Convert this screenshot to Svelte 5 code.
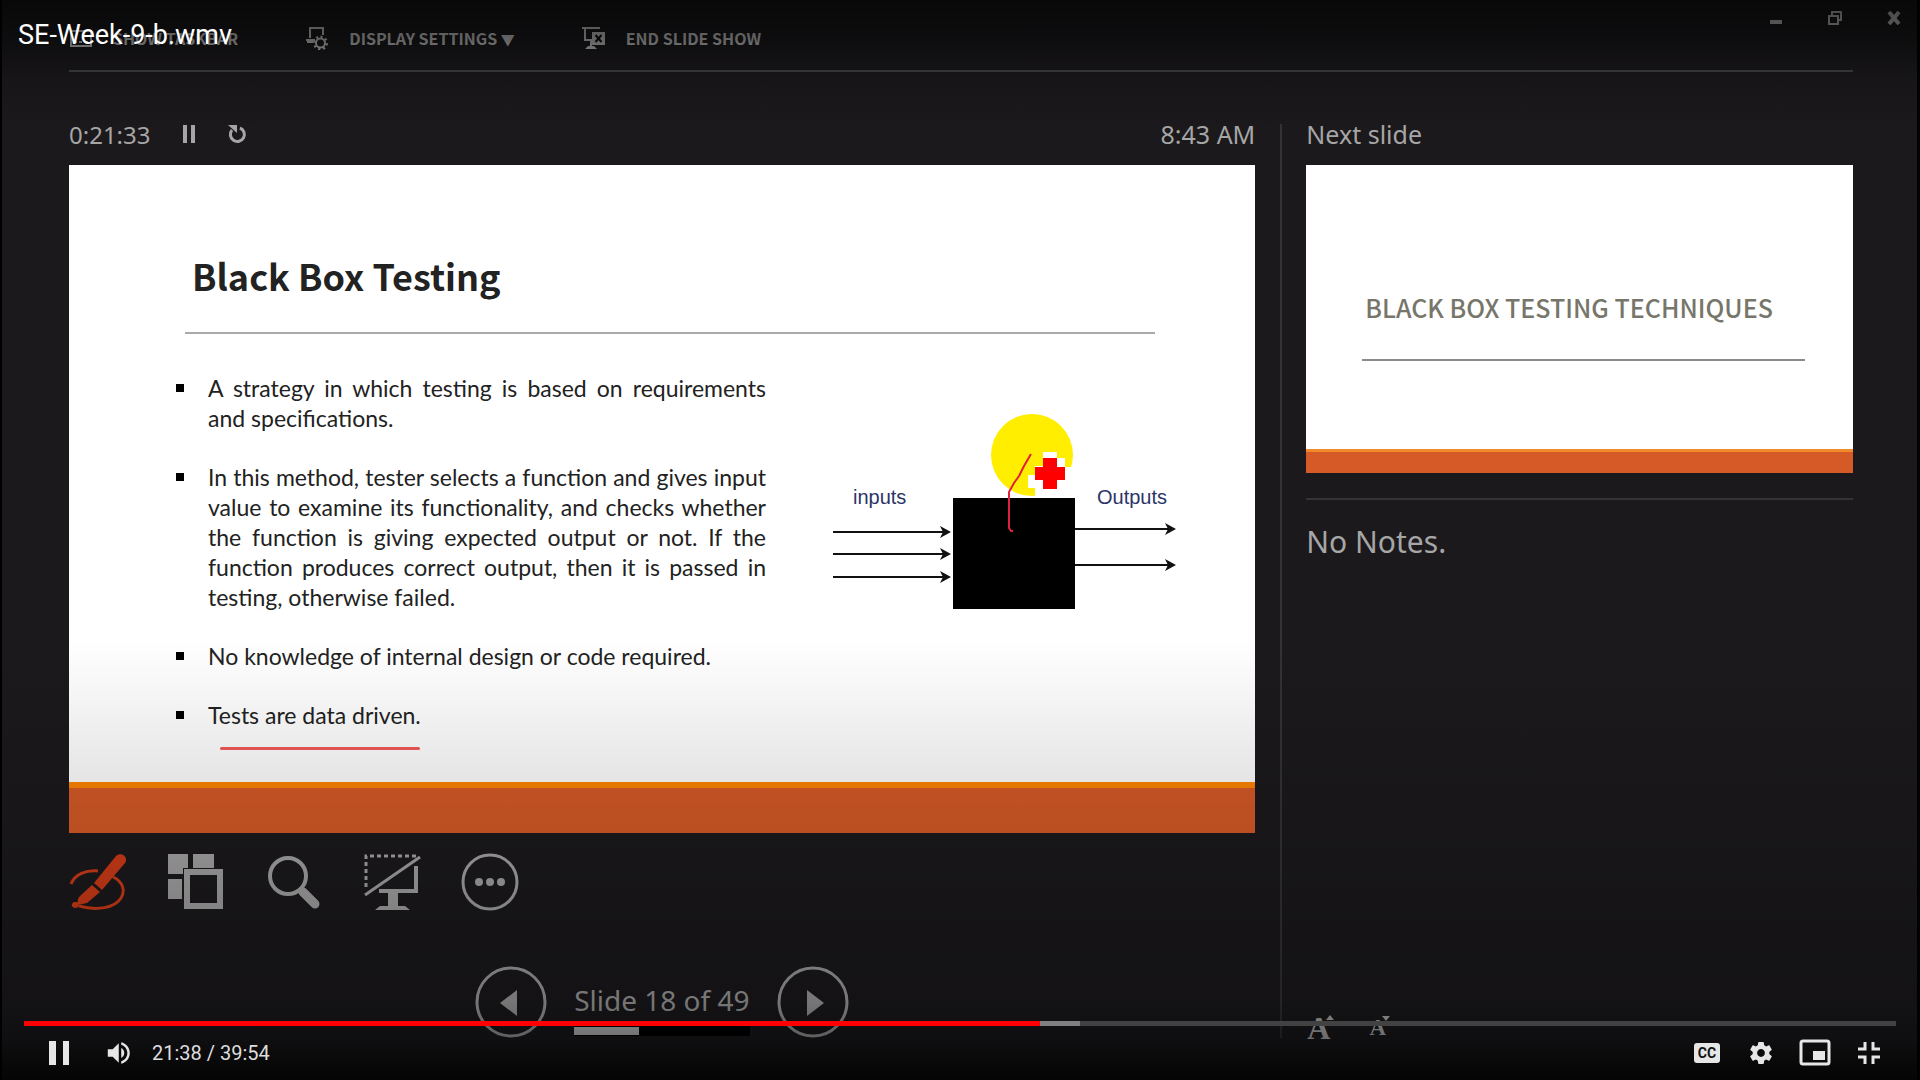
<script>
  const videoTitle = 'SE-Week-9-b.wmv';
  const slideNumber = 18;
  const slideCount = 49;
  const duration = 2394;
  const buffered = 1351;
  let position = $state(1299);

  const points = [
    'A strategy in which testing is based on requirements and specifications.',
    'In this method, tester selects a function and gives input value to examine its functionality, and checks whether the function is giving expected output or not. If the function produces correct output, then it is passed in testing, otherwise failed.',
    'No knowledge of internal design or code required.',
    'Tests are data driven.'
  ];

  const percent = (value, total) => `${(value / total) * 100}%`;
</script>

<div class="player">
  <main class="presenter">
    <header class="topbar">
      <nav class="menu" aria-label="Presenter menu">
        <button class="menu-item">
          <svg width="24" height="24" viewBox="0 0 24 24" fill="none" stroke="currentColor" stroke-width="2" aria-hidden="true">
            <rect x="2" y="5" width="20" height="15" /><path d="M5 16h3M10 16h3M15 16h4" />
          </svg>
          <span>SHOW TASKBAR</span>
        </button>
        <button class="menu-item">
          <svg width="24" height="24" viewBox="0 0 24 24" fill="none" stroke="currentColor" stroke-width="2" aria-hidden="true">
            <path d="M5 12V2h13v7M1 14h9M2 16h6" />
            <circle cx="15.500" cy="17" r="4.500" />
            <path stroke-width="3" stroke-dasharray="2 2.710" d="M15.500 11a6 6 0 1 1-.01 0" />
          </svg>
          <span>DISPLAY SETTINGS <span class="caret">▼</span></span>
        </button>
        <button class="menu-item">
          <svg width="24" height="24" viewBox="0 0 24 24" fill="none" stroke="currentColor" stroke-width="2" aria-hidden="true">
            <path d="M0 2h18M3 2v12h7M9 14v7" />
            <path fill="currentColor" stroke="none" d="M3 23l3-3h6l3 3zM10 6h13v13H10z" />
            <path stroke="#0e0d0e" d="M13.500 9l6 7M19.500 9l-6 7" />
          </svg>
          <span>END SLIDE SHOW</span>
        </button>
      </nav>
      <div class="window-buttons">
        <button aria-label="Minimize">
          <svg width="16" height="16" viewBox="0 0 16 16" aria-hidden="true"><path fill="currentColor" d="M2 10h12v4H2z" /></svg>
        </button>
        <button aria-label="Restore">
          <svg width="16" height="16" viewBox="0 0 16 16" fill="none" stroke="currentColor" stroke-width="2" aria-hidden="true"><path d="M2 6h9v8H2zM5 5V2h9v8h-3" /></svg>
        </button>
        <button aria-label="Close window">
          <svg width="16" height="16" viewBox="0 0 16 16" fill="none" stroke="currentColor" stroke-width="4" aria-hidden="true"><path d="M3 2l10 12M13 2L3 14" /></svg>
        </button>
      </div>
    </header>

    <div class="workspace">
      <section class="current">
        <div class="clock-row">
          <span class="timer">0:21:33</span>
          <button aria-label="Pause timer">
            <svg width="20" height="20" viewBox="0 0 20 20" aria-hidden="true"><path fill="currentColor" d="M4 1h4v18H4zM12 1h4v18h-4z" /></svg>
          </button>
          <button aria-label="Restart timer">
            <svg width="20" height="20" viewBox="0 0 20 20" fill="none" stroke="currentColor" stroke-width="3" aria-hidden="true"><path d="M13 4a7 7 0 1 1-8 2" /><path fill="currentColor" stroke="none" d="M1 1h9v8z" /></svg>
          </button>
          <time>8:43 AM</time>
        </div>

        <article class="slide">
          <h1>Black Box Testing</h1>
          <div class="slide-body">
            <ul>
              {#each points as point, index}
                <li class:marked={index === points.length - 1}><span>{point}</span></li>
              {/each}
            </ul>
            <svg class="diagram" viewBox="0 0 364 200" role="img" aria-label="Black box with inputs and outputs">
              <circle cx="211" cy="45" r="41" fill="#ffee00" />
              <path fill="#fff" d="M222 42h14v6h8v9h12v42h-34V87h-8V78h-7V65h7v-9h8z" />
              <rect x="132" y="88" width="122" height="111" fill="#000" />
              <path fill="#f00" d="M222 48h14v9h8v13h-8v9h-14v-9h-8V57h8z" />
              <path fill="none" stroke="#e0203c" stroke-width="2" stroke-linejoin="round" d="M210 44l-7 12-5 10-5 7-5 9v36l2 3h2" />
              <g fill="none" stroke="#111" stroke-width="2">
                <path d="M12 122h114M12 144h114M12 167h114M254 119h98M254 155h98" />
              </g>
              <g fill="#111">
                <path d="M119 116l11 6-11 6 3-6zM119 138l11 6-11 6 3-6zM119 161l11 6-11 6 3-6zM344 113l11 6-11 6 3-6zM344 149l11 6-11 6 3-6z" />
              </g>
              <text x="32" y="94">inputs</text>
              <text x="276" y="94">Outputs</text>
            </svg>
          </div>
        </article>

        <div class="tools">
          <button class="pen" aria-label="Pen and laser pointer tools">
            <svg width="58" height="58" viewBox="0 0 58 58" aria-hidden="true">
              <path fill="none" stroke="currentColor" stroke-width="3" d="M2 31C6 21 17 17 29 18M44 24c9 4 13 13 8 21-6 10-24 13-42 8" />
              <path fill="currentColor" d="M25 30L47 3c5-5 13 1 9 7L33 37zM23 32l8 7-13 11-9 2c-1-4 0-7 2-9zM6 49c4-1 6 5 1 6-6 0-5-6-1-6z" />
            </svg>
          </button>
          <button aria-label="See all slides">
            <svg width="58" height="58" viewBox="0 0 58 58" aria-hidden="true">
              <path fill="currentColor" d="M1 1h20v14h-5v6H1zM26 1h21v14H26zM1 26h14v20H1z" />
              <path fill="none" stroke="currentColor" stroke-width="6" d="M20 19h33v34H20z" />
            </svg>
          </button>
          <button aria-label="Zoom into the slide">
            <svg width="58" height="58" viewBox="0 0 58 58" fill="none" stroke="currentColor" aria-hidden="true">
              <circle cx="23" cy="23" r="18" stroke-width="4" />
              <path stroke-width="5" d="M35 35l5 5" /><path stroke-width="9" stroke-linecap="round" d="M38 39l12 12" />
            </svg>
          </button>
          <button aria-label="Black or unblack slide show">
            <svg width="58" height="58" viewBox="0 0 58 58" fill="none" stroke="currentColor" aria-hidden="true">
              <path stroke-width="3" stroke-dasharray="4 3" d="M53 3H3v34" />
              <path stroke-width="3" d="M2 42L57 4" />
              <path stroke-width="4" d="M53 13v25H16" />
              <path fill="currentColor" stroke="none" d="M25 40h10v13h7l5 4H12l5-4h8z" />
            </svg>
          </button>
          <button aria-label="More slide show options">
            <svg width="58" height="58" viewBox="0 0 58 58" aria-hidden="true">
              <circle cx="29" cy="29" r="27" fill="none" stroke="currentColor" stroke-width="3" />
              <g fill="currentColor"><circle cx="18" cy="29" r="4" /><circle cx="29" cy="29" r="4" /><circle cx="40" cy="29" r="4" /></g>
            </svg>
          </button>
        </div>

        <div class="pager">
          <button aria-label="Previous slide">
            <svg width="72" height="72" viewBox="0 0 72 72" aria-hidden="true"><circle cx="36" cy="36" r="34" fill="none" stroke="currentColor" stroke-width="3" /><path fill="currentColor" d="M42 24v26L25 37z" /></svg>
          </button>
          <div class="counter">
            <span>Slide {slideNumber} of {slideCount}</span>
            <div class="track"><div class="fill" style:width={percent(slideNumber, slideCount)}></div></div>
          </div>
          <button aria-label="Next slide">
            <svg width="72" height="72" viewBox="0 0 72 72" aria-hidden="true"><circle cx="36" cy="36" r="34" fill="none" stroke="currentColor" stroke-width="3" /><path fill="currentColor" d="M30 24v26l17-13z" /></svg>
          </button>
        </div>
      </section>

      <aside class="upcoming">
        <h2>Next slide</h2>
        <article class="preview"><h3>BLACK BOX TESTING TECHNIQUES</h3></article>
        <p class="notes">No Notes.</p>
        <div class="text-size">
          <button aria-label="Make the text larger">
            <span class="big">A</span>
            <svg width="8" height="24" viewBox="0 0 8 24" aria-hidden="true"><path fill="currentColor" d="M0 6l4-5 4 5z" /></svg>
          </button>
          <button aria-label="Make the text smaller">
            <span class="small">A</span>
            <svg width="8" height="24" viewBox="0 0 8 24" aria-hidden="true"><path fill="currentColor" d="M0 2h8L4 7z" /></svg>
          </button>
        </div>
      </aside>
    </div>
  </main>

  <div class="chrome">
    <div class="video-title">{videoTitle}</div>
    <div class="controls">
      <input
        class="seek"
        type="range"
        min="0"
        max={duration}
        bind:value={position}
        aria-label="Seek"
        style:--played={percent(position, duration)}
        style:--loaded={percent(buffered, duration)}
      />
      <div class="buttons">
        <button class="play" aria-label="Pause">
          <svg width="54" height="54" viewBox="0 0 54 54" aria-hidden="true"><path fill="currentColor" d="M17 15h7v24h-7zM31 15h6v24h-6z" /></svg>
        </button>
        <button aria-label="Mute">
          <svg width="44" height="44" viewBox="0 0 36 36" aria-hidden="true"><path fill="currentColor" d="M8 21h4l5 5V10l-5 5H8zM19 14v8c1.480-.68 2.500-2.230 2.500-4s-1.020-3.260-2.500-4zM19 11.290c2.890.86 5 3.540 5 6.710s-2.110 5.850-5 6.710v2.060c4.010-.91 7-4.490 7-8.770s-2.990-7.860-7-8.770z" /></svg>
        </button>
        <span class="time">21:38 / 39:54</span>
        <span class="spacer"></span>
        <button aria-label="Subtitles">
          <svg width="54" height="54" viewBox="0 0 54 54" aria-hidden="true"><rect x="14" y="17" width="26" height="20" rx="3" fill="currentColor" /><text class="cc" x="27" y="32" text-anchor="middle">CC</text></svg>
        </button>
        <button aria-label="Settings">
          <svg width="50" height="50" viewBox="0 0 36 36" aria-hidden="true"><path fill="currentColor" d="m23.940 18.780c.03-.25.05-.51.05-.78 0-.27-.02-.52-.05-.78l1.680-1.320c.15-.12.19-.33.09-.51l-1.600-2.760c-.09-.17-.31-.24-.48-.17l-1.990.8c-.41-.32-.86-.58-1.350-.78l-.30-2.120c-.02-.19-.19-.33-.39-.33l-3.200 0c-.2 0-.36.14-.39.33l-.30 2.120c-.48.2-.93.47-1.350.78l-1.990-.8c-.18-.07-.39 0-.48.17l-1.600 2.760c-.10.17-.05.39.09.51l1.680 1.320c-.03.25-.05.52-.05.78 0 .26.02.52.05.78l-1.680 1.320c-.15.12-.19.33-.09.51l1.600 2.760c.09.17.31.24.48.17l1.990-.8c.41.32.86.58 1.350.78l.30 2.120c.02.19.19.33.39.33l3.200 0c.2 0 .36-.14.39-.33l.30-2.120c.48-.2.93-.47 1.350-.78l1.990.8c.18.07.39 0 .48-.17l1.600-2.760c.09-.17.05-.39-.09-.51l-1.680-1.320zm-5.940 2.010c-1.540 0-2.800-1.250-2.800-2.800 0-1.540 1.250-2.800 2.800-2.800 1.540 0 2.800 1.250 2.800 2.800 0 1.540-1.250 2.800-2.800 2.800z" /></svg>
        </button>
        <button aria-label="Miniplayer">
          <svg width="54" height="54" viewBox="0 0 54 54" aria-hidden="true"><rect x="13" y="15" width="28" height="23" rx="2" fill="none" stroke="currentColor" stroke-width="3" /><path fill="currentColor" d="M25 25h12v9H25z" /></svg>
        </button>
        <button aria-label="Exit full screen">
          <svg width="54" height="54" viewBox="0 0 54 54" fill="none" stroke="currentColor" stroke-width="3" aria-hidden="true"><path d="M16 23h7v-7M38 23h-7v-7M16 31h7v7M38 31h-7v7" /></svg>
        </button>
      </div>
    </div>
  </div>
</div>

<style>
  :global(body) {
    margin: 0;
    background: #000;
  }

  .player {
    display: grid;
    min-height: 100vh;
    font-family: 'Noto Sans', 'Open Sans', sans-serif;
  }

  .presenter,
  .chrome {
    grid-area: 1 / 1;
  }

  button {
    display: flex;
    align-items: center;
    justify-content: center;
    padding: 0;
    border: 0;
    background: none;
    color: inherit;
    font: inherit;
    cursor: pointer;
  }

  svg {
    display: block;
    flex: none;
  }

  h1,
  h2,
  h3,
  p,
  ul {
    margin: 0;
    padding: 0;
    font-weight: 400;
  }

  .presenter {
    display: flex;
    flex-direction: column;
    box-sizing: border-box;
    padding: 0 64px 42px 67px;
    border: solid #000;
    border-width: 0 3px 0 2px;
    background: #1b191c;
    color: #a6a6a6;
  }

  .topbar {
    display: flex;
    justify-content: space-between;
    height: 70px;
    border-bottom: 2px solid #444345;
    color: #c8c8c8;
  }

  .menu {
    display: flex;
    align-items: center;
    gap: 67px;
    padding-top: 6px;
    font-family: 'Noto Sans CJK SC', sans-serif;
    font-size: 16px;
    font-weight: 700;
  }

  .menu-item {
    gap: 20px;
  }

  .caret {
    font-size: 14px;
  }

  .window-buttons {
    display: flex;
    align-items: flex-start;
    gap: 43px;
    margin-right: -49px;
    padding-top: 10px;
  }

  .workspace {
    display: grid;
    flex: 1;
    grid-template-columns: minmax(0, 1187fr) minmax(0, 573fr);
    gap: 25px;
    padding-top: 52px;
  }

  .current {
    display: flex;
    flex-direction: column;
  }

  .clock-row {
    display: flex;
    align-items: center;
    gap: 28px;
    height: 20px;
    margin-bottom: 21px;
    font-size: 25px;
  }

  .timer {
    font-size: 24px;
  }

  .clock-row time {
    margin-left: auto;
  }

  .slide {
    display: flex;
    flex-direction: column;
    box-sizing: border-box;
    aspect-ratio: 1187 / 668;
    padding: 83px 70px 0 107px;
    border-bottom: 45px solid #d55a27;
    background: linear-gradient(#fff, #fff) 0 0 / 100% calc(100% - 6px) no-repeat, #ff8500;
    background-clip: padding-box;
    color: #222;
    font-family: 'Noto Sans CJK SC', sans-serif;
  }

  .slide h1 {
    margin-right: 30px;
    margin-left: 9px;
    padding: 0 0 30px 7px;
    border-bottom: 2px solid #aaa;
    font-size: 36px;
    font-weight: 700;
    line-height: 54px;
  }

  .slide-body {
    display: flex;
    align-items: flex-start;
    justify-content: space-between;
    padding-top: 39px;
  }

  ul {
    display: flex;
    flex: none;
    flex-direction: column;
    gap: 29px;
    width: 590px;
    font-family: Lato, sans-serif;
    font-size: 23px;
    line-height: 30px;
    list-style: none;
    text-align: justify;
  }

  li {
    display: flex;
    gap: 24px;
  }

  li::before {
    flex: none;
    width: 8px;
    height: 8px;
    margin-top: 11px;
    background: #000;
    content: '';
  }

  li span {
    flex: 1;
  }

  .marked {
    position: relative;
  }

  .marked::after {
    position: absolute;
    top: 47px;
    left: 44px;
    width: 200px;
    height: 3px;
    border-radius: 2px;
    background: #f05a5a;
    content: '';
  }

  .diagram {
    width: 364px;
    margin-top: 37px;
  }

  .diagram text {
    fill: #2b3468;
    font-family: 'Liberation Sans', sans-serif;
    font-size: 20px;
  }

  .tools {
    display: flex;
    gap: 40px;
    margin-top: 20px;
    color: #a5a5a5;
  }

  .pen {
    color: #d23c18;
  }

  .pager {
    display: flex;
    align-items: center;
    justify-content: center;
    gap: 27px;
    margin-top: auto;
    color: #a5a5a5;
  }

  .counter {
    display: flex;
    flex-direction: column;
    gap: 8px;
    width: 176px;
    padding-top: 14px;
    font-size: 28px;
    line-height: 36px;
    white-space: nowrap;
  }

  .track {
    box-sizing: border-box;
    height: 10px;
    padding: 1px 0;
    background: #000;
  }

  .fill {
    height: 8px;
    background: #c8c8c8;
  }

  .upcoming {
    display: flex;
    flex-direction: column;
    padding-left: 24px;
    border-left: 2px solid #333234;
  }

  h2 {
    margin-bottom: 21px;
    font-size: 25px;
    line-height: 20px;
  }

  .preview {
    box-sizing: border-box;
    aspect-ratio: 547 / 308;
    padding: 122px 48px 0 56px;
    border-bottom: 21px solid #d55a27;
    background: linear-gradient(#fff, #fff) 0 0 / 100% calc(100% - 3px) no-repeat, #f08a2c;
    background-clip: padding-box;
    color: #77766a;
  }

  h3 {
    padding: 0 0 32px 3px;
    border-bottom: 2px solid #8a8a8a;
    font-family: 'Noto Sans CJK SC', sans-serif;
    font-size: 25px;
    font-weight: 500;
    line-height: 40px;
    white-space: nowrap;
  }

  .notes {
    margin-top: 25px;
    padding-top: 21px;
    border-top: 2px solid #343335;
    font-size: 30px;
    line-height: 42px;
  }

  .text-size {
    display: flex;
    gap: 35px;
    margin-top: auto;
    padding-left: 1px;
    color: #bdbdbd;
    font-family: 'Liberation Serif', serif;
    font-weight: 700;
  }

  .text-size button {
    align-items: flex-end;
    height: 24px;
    line-height: 20px;
  }

  .text-size svg {
    margin-left: -4px;
  }

  .big {
    font-size: 32px;
  }

  .small {
    font-size: 23px;
  }

  .chrome {
    z-index: 1;
    display: flex;
    flex-direction: column;
    justify-content: space-between;
    background:
      linear-gradient(rgba(0, 0, 0, 0.68), rgba(0, 0, 0, 0.5) 40px, rgba(0, 0, 0, 0.16) 80px, transparent 130px),
      linear-gradient(to top, rgba(0, 0, 0, 0.82), rgba(0, 0, 0, 0.44) 40px, rgba(0, 0, 0, 0.28) 80px, rgba(0, 0, 0, 0.22) 160px, rgba(0, 0, 0, 0.12) 248px, rgba(0, 0, 0, 0.1) 300px, transparent 440px);
    color: #fff;
    font-family: Roboto, sans-serif;
  }

  .video-title {
    padding: 19px 18px;
    font-size: 27px;
    line-height: 32px;
  }

  .controls {
    display: flex;
    flex-direction: column;
    padding: 0 24px;
    color: #e6e6e6;
  }

  .seek {
    width: 100%;
    height: 5px;
    margin: 0;
    appearance: none;
    background: linear-gradient(
      to right,
      #f00 var(--played),
      #808080 var(--played),
      #808080 var(--loaded),
      #424242 var(--loaded)
    );
    cursor: pointer;
  }

  .seek::-webkit-slider-thumb {
    width: 0;
    height: 0;
    appearance: none;
  }

  .buttons {
    display: flex;
    align-items: center;
    height: 54px;
  }

  .buttons button {
    width: 54px;
    height: 54px;
  }

  .buttons .play {
    width: 69px;
  }

  .time {
    margin-left: 5px;
    color: #ddd;
    font-size: 20px;
  }

  .spacer {
    flex: 1;
  }

  .cc {
    fill: #111;
    font-size: 14px;
    font-weight: 700;
  }
</style>
